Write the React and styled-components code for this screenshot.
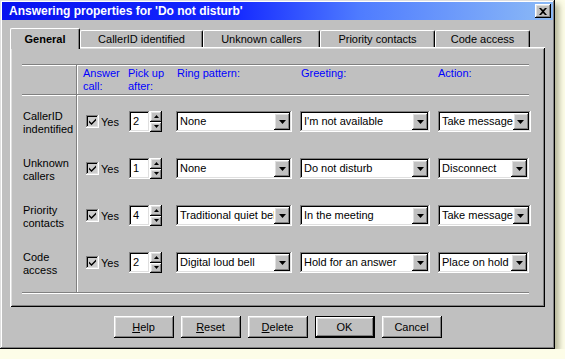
import React from 'react';
import styled, { createGlobalStyle, css } from 'styled-components';

const GlobalStyle = createGlobalStyle`
  html, body {
    margin: 0;
    padding: 0;
    background: #fdfde8;
  }

  body {
    font-family: "Liberation Sans", Arial, sans-serif;
    font-size: 11px;
    color: #000;
  }
`;

const raised = css`
  box-shadow: inset -1px -1px #000, inset 1px 1px #fff, inset -2px -2px #808080, inset 2px 2px #dfdfdf;
`;

const sunken = css`
  box-shadow: inset -1px -1px #fff, inset 1px 1px #808080, inset -2px -2px #dfdfdf, inset 2px 2px #000;
`;

const ROWS = [
  { label: ['CallerID', 'indentified'], after: '2', ring: 'None', greeting: "I'm not available", action: 'Take message' },
  { label: ['Unknown', 'callers'], after: '1', ring: 'None', greeting: 'Do not disturb', action: 'Disconnect' },
  { label: ['Priority', 'contacts'], after: '4', ring: 'Traditional quiet bell', greeting: 'In the meeting', action: 'Take message' },
  { label: ['Code', 'access'], after: '2', ring: 'Digital loud bell', greeting: 'Hold for an answer', action: 'Place on hold' },
];

const TABS = [
  { title: 'General', width: 70 },
  { title: 'CallerID identified', width: 123 },
  { title: 'Unknown callers', width: 117 },
  { title: 'Priority contacts', width: 115 },
  { title: 'Code access', width: 95 },
];

const HEADERS = [
  { text: ['Answer', 'call:'], indent: 6 },
  { text: ['Pick up', 'after:'], indent: 1 },
  { text: ['Ring pattern:'], indent: 2 },
  { text: ['Greeting:'], indent: 2 },
  { text: ['Action:'], indent: 1 },
];

const DownArrow = ({ size = 7 }) => (
  <svg width={size} height={Math.ceil(size / 2)} viewBox="0 0 7 4">
    <path d="M0 0h7L3.5 4z" fill="#000" />
  </svg>
);

const Combo = ({ value, width }) => (
  <ComboBox $width={width}>
    <ComboText>{value}</ComboText>
    <ComboArrow>
      <DownArrow />
    </ComboArrow>
  </ComboBox>
);

const Spinner = ({ value }) => (
  <SpinWrap>
    <SpinEdit>{value}</SpinEdit>
    <SpinButtons>
      <SpinButton>
        <svg width="5" height="3" viewBox="0 0 5 3"><path d="M0 3h5L2.5 0z" fill="#000" /></svg>
      </SpinButton>
      <SpinButton>
        <svg width="5" height="3" viewBox="0 0 5 3"><path d="M0 0h5L2.5 3z" fill="#000" /></svg>
      </SpinButton>
    </SpinButtons>
  </SpinWrap>
);

const App = () => (
  <>
    <GlobalStyle />
    <Window>
      <TitleBar>
        <TitleText>Answering properties for 'Do not disturb'</TitleText>
        <CloseButton>
          <svg width="8" height="7" viewBox="0 0 8 7">
            <path d="M0 0h2l2 2 2-2h2L5 3.5 8 7H6L4 5 2 7H0l3-3.5z" fill="#000" />
          </svg>
        </CloseButton>
      </TitleBar>

      <Content>
        <TabStrip>
          {TABS.map((tab, i) => (
            <Tab key={tab.title} $width={tab.width} $active={i === 0}>
              {tab.title}
            </Tab>
          ))}
        </TabStrip>

        <Panel>
          <Table>
            <LabelColumn>
              <LabelHeader />
              <LabelBody>
                {ROWS.map((row) => (
                  <LabelRow key={row.label.join(' ')}>
                    <span>{row.label[0]}<br />{row.label[1]}</span>
                  </LabelRow>
                ))}
              </LabelBody>
            </LabelColumn>

            <DataColumn>
              <HeaderRow>
                {HEADERS.map((h) => (
                  <HeaderCell key={h.text[0]} $indent={h.indent}>
                    {h.text.map((line) => (
                      <div key={line}>{line}</div>
                    ))}
                  </HeaderCell>
                ))}
              </HeaderRow>
              <DataBody>
                {ROWS.map((row) => (
                  <DataRow key={row.label.join(' ')}>
                    <CheckCell>
                      <Checkbox>
                        <svg width="7" height="7" viewBox="0 0 7 7">
                          <path d="M0 2.5v2l2.5 2.5 4.5-4.5v-2L2.5 5z" fill="#000" />
                        </svg>
                      </Checkbox>
                      <CheckLabel>Yes</CheckLabel>
                    </CheckCell>
                    <ControlCell $indent={2}>
                      <Spinner value={row.after} />
                    </ControlCell>
                    <ControlCell $indent={1}>
                      <Combo value={row.ring} width={116} />
                    </ControlCell>
                    <ControlCell $indent={1}>
                      <Combo value={row.greeting} width={130} />
                    </ControlCell>
                    <ControlCell $indent={1}>
                      <Combo value={row.action} width={93} />
                    </ControlCell>
                  </DataRow>
                ))}
              </DataBody>
            </DataColumn>
          </Table>
        </Panel>

        <ButtonRow>
          <Button><u>H</u>elp</Button>
          <Button><u>R</u>eset</Button>
          <Button><u>D</u>elete</Button>
          <Button $default>OK</Button>
          <Button>Cancel</Button>
        </ButtonRow>
      </Content>
    </Window>
  </>
);

const Window = styled.div`
  width: 555px;
  height: 349px;
  box-sizing: border-box;
  padding: 2px;
  background: #c0c0c0;
  display: flex;
  flex-direction: column;
  box-shadow: inset -1px -1px #000, inset 1px 1px #dfdfdf, inset -2px -2px #808080, inset 2px 2px #fff,
    4px 4px 6px rgba(90, 90, 50, 0.45);
`;

const TitleBar = styled.div`
  height: 18px;
  flex: none;
  display: flex;
  align-items: center;
  justify-content: space-between;
  padding: 0 2px 0 7px;
  background: linear-gradient(90deg, #0812f0 0%, #1428ff 42%, #4f7cff 65%, #8cbaf6 100%);
`;

const TitleText = styled.span`
  color: #fff;
  font-weight: bold;
  font-size: 12px;
  white-space: nowrap;
`;

const CloseButton = styled.div`
  width: 16px;
  height: 14px;
  background: #c0c0c0;
  display: flex;
  align-items: center;
  justify-content: center;
  ${raised}
`;

const Content = styled.div`
  flex: 1;
  display: flex;
  flex-direction: column;
  padding: 8px 8px 0;
`;

const TabStrip = styled.div`
  height: 19px;
  display: flex;
  align-items: flex-end;
  position: relative;
  z-index: 1;
`;

const Tab = styled.div`
  width: ${(p) => p.$width}px;
  height: ${(p) => (p.$active ? 21 : 17)}px;
  margin-bottom: ${(p) => (p.$active ? -2 : 0)}px;
  box-sizing: border-box;
  padding-top: ${(p) => (p.$active ? 4 : 2)}px;
  background: #c0c0c0;
  border-top: 1px solid #fff;
  border-left: 1px solid #fff;
  border-right: 1px solid #000;
  border-radius: 2px 2px 0 0;
  box-shadow: inset -1px 0 #808080;
  text-align: center;
  line-height: 13px;
  font-weight: ${(p) => (p.$active ? 'bold' : 'normal')};
  white-space: nowrap;
`;

const Panel = styled.div`
  height: 260px;
  box-sizing: border-box;
  padding: 17px 0 0 12px;
  background: #c0c0c0;
  box-shadow: inset 1px 1px #fff, inset -1px -1px #000, inset 2px 2px #dfdfdf, inset -2px -2px #808080;
`;

const Table = styled.div`
  width: 507px;
  display: flex;
  border-top: 1px solid #808080;
  border-bottom: 1px solid #808080;
  box-shadow: inset 0 1px #fff, 0 1px #fff;
`;

const LabelColumn = styled.div`
  width: 55px;
  box-sizing: border-box;
  border-right: 1px solid #808080;
  box-shadow: 1px 0 #fff;
`;

const LabelHeader = styled.div`
  height: 29px;
  border-bottom: 1px solid #808080;
  box-shadow: 0 1px #fff;
`;

const LabelBody = styled.div`
  padding: 3px 0 6px;
`;

const LabelRow = styled.div`
  height: 47px;
  display: flex;
  align-items: center;
  padding: 3px 0 0 1px;
  box-sizing: border-box;
  line-height: 13px;
`;

const DataColumn = styled.div`
  flex: 1;
`;

const columns = css`
  display: grid;
  grid-template-columns: 50px 48px 124px 138px 92px;
`;

const HeaderRow = styled.div`
  ${columns}
  height: 29px;
  border-bottom: 1px solid #808080;
  box-shadow: 0 1px #fff;
`;

const HeaderCell = styled.div`
  color: #0000ff;
  line-height: 13px;
  padding: 2px 0 0 ${(p) => p.$indent}px;
`;

const DataBody = styled.div`
  padding: 3px 0 6px;
`;

const DataRow = styled.div`
  ${columns}
  height: 47px;
  align-items: center;
`;

const ControlCell = styled.div`
  display: flex;
  padding-left: ${(p) => p.$indent}px;
`;

const CheckCell = styled.div`
  display: flex;
  align-items: center;
  padding-left: 9px;
`;

const Checkbox = styled.div`
  width: 13px;
  height: 13px;
  box-sizing: border-box;
  background: #cdcdcd;
  display: flex;
  align-items: center;
  justify-content: center;
  ${sunken}
`;

const CheckLabel = styled.span`
  margin-left: 2px;
`;

const SpinWrap = styled.div`
  display: flex;
  height: 21px;
`;

const SpinEdit = styled.div`
  width: 21px;
  height: 21px;
  box-sizing: border-box;
  padding-left: 4px;
  line-height: 21px;
  background: #fff;
  ${sunken}
`;

const SpinButtons = styled.div`
  width: 12px;
  display: flex;
  flex-direction: column;
`;

const SpinButton = styled.div`
  flex: 1;
  display: flex;
  align-items: center;
  justify-content: center;
  background: #c0c0c0;
  ${raised}
`;

const ComboBox = styled.div`
  width: ${(p) => p.$width}px;
  height: 21px;
  box-sizing: border-box;
  padding: 2px;
  display: flex;
  background: #fff;
  ${sunken}
`;

const ComboText = styled.div`
  flex: 1;
  min-width: 0;
  overflow: hidden;
  white-space: nowrap;
  padding-left: 2px;
  line-height: 17px;
`;

const ComboArrow = styled.div`
  width: 16px;
  height: 17px;
  flex: none;
  display: flex;
  align-items: center;
  justify-content: center;
  background: #c0c0c0;
  ${raised}
`;

const ButtonRow = styled.div`
  margin-top: 9px;
  display: flex;
  justify-content: center;
  gap: 7px;
`;

const Button = styled.div`
  width: 60px;
  height: 22px;
  box-sizing: border-box;
  display: flex;
  align-items: center;
  justify-content: center;
  background: #c0c0c0;
  ${(p) => (p.$default
    ? css`
        box-shadow: inset 0 0 0 1px #000, inset -2px -2px #000, inset 2px 2px #fff, inset -3px -3px #808080,
          inset 3px 3px #dfdfdf;
      `
    : raised)}

  u {
    text-decoration: underline;
  }
`;

export default App;
